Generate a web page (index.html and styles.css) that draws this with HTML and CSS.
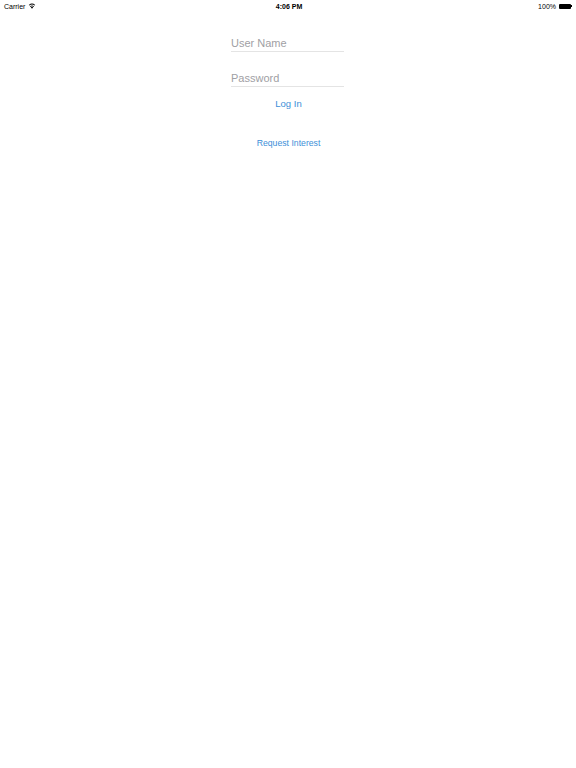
FILE: index.html
```html
<!DOCTYPE html>
<html>
<head>
<meta charset="utf-8">
<link rel="stylesheet" href="styles.css">
</head>
<body>
<div class="status">
  <div class="left">
    <span>Carrier</span>
    <svg class="wifi" width="8" height="6" viewBox="0 0 16 12">
      <path d="M8 11.5 L5.6 8.6 A3.6 3.6 0 0 1 10.4 8.6 Z" fill="#000"/>
      <path d="M3.9 6.6 A6.2 6.2 0 0 1 12.1 6.6 L11 7.9 A4.5 4.5 0 0 0 5 7.9 Z" fill="#000"/>
      <path d="M1.6 3.9 A9.6 9.6 0 0 1 14.4 3.9 L13.3 5.2 A7.9 7.9 0 0 0 2.7 5.2 Z" fill="#000"/>
    </svg>
  </div>
  <div class="time">4:06 PM</div>
  <div class="right">
    <span>100%</span>
    <span class="battery"><span class="cell"></span><span class="tip"></span></span>
  </div>
</div>
<main class="form">
  <div class="field">User Name</div>
  <div class="field">Password</div>
  <div class="login">Log In</div>
  <div class="request">Request Interest</div>
</main>
</body>
</html>
```
FILE: styles.css
```css
html, body { margin: 0; padding: 0; background: #fff; }
body { width: 576px; height: 768px; font-family: "Liberation Sans", Arial, sans-serif; }
.status {
  height: 12px;
  display: grid;
  grid-template-columns: 1fr auto 1fr;
  align-items: center;
  font-size: 7px;
  color: #000;
  padding: 0 4px;
}
.left { display: flex; align-items: center; gap: 3px; }
.wifi { display: block; }
.time { font-weight: bold; text-align: center; padding-left: 2px; }
.right { display: flex; justify-content: flex-end; align-items: center; gap: 3px; }
.battery { display: flex; align-items: center; }
.cell { width: 12px; height: 5px; background: #000; border-radius: 1px; }
.tip { width: 1px; height: 2px; background: #000; }
.form {
  width: 113px;
  margin: 0 auto;
  padding-right: 1px;
  display: flex;
  flex-direction: column;
  font-family: "Liberation Sans", Arial, sans-serif;
}
.field {
  margin-top: 25px;
  font-size: 11px;
  line-height: 13px;
  color: #a0a0a4;
  padding-bottom: 1px;
  border-bottom: 1px solid #e4e4e4;
}
.form .field + .field { margin-top: 20px; }
.login {
  margin-top: 11px;
  padding-left: 2px;
  text-align: center;
  font-size: 9.5px;
  color: #3d8fd8;
}
.request {
  margin-top: 29px;
  padding-left: 2px;
  text-align: center;
  font-size: 8.7px;
  color: #3d8fd8;
}
```
